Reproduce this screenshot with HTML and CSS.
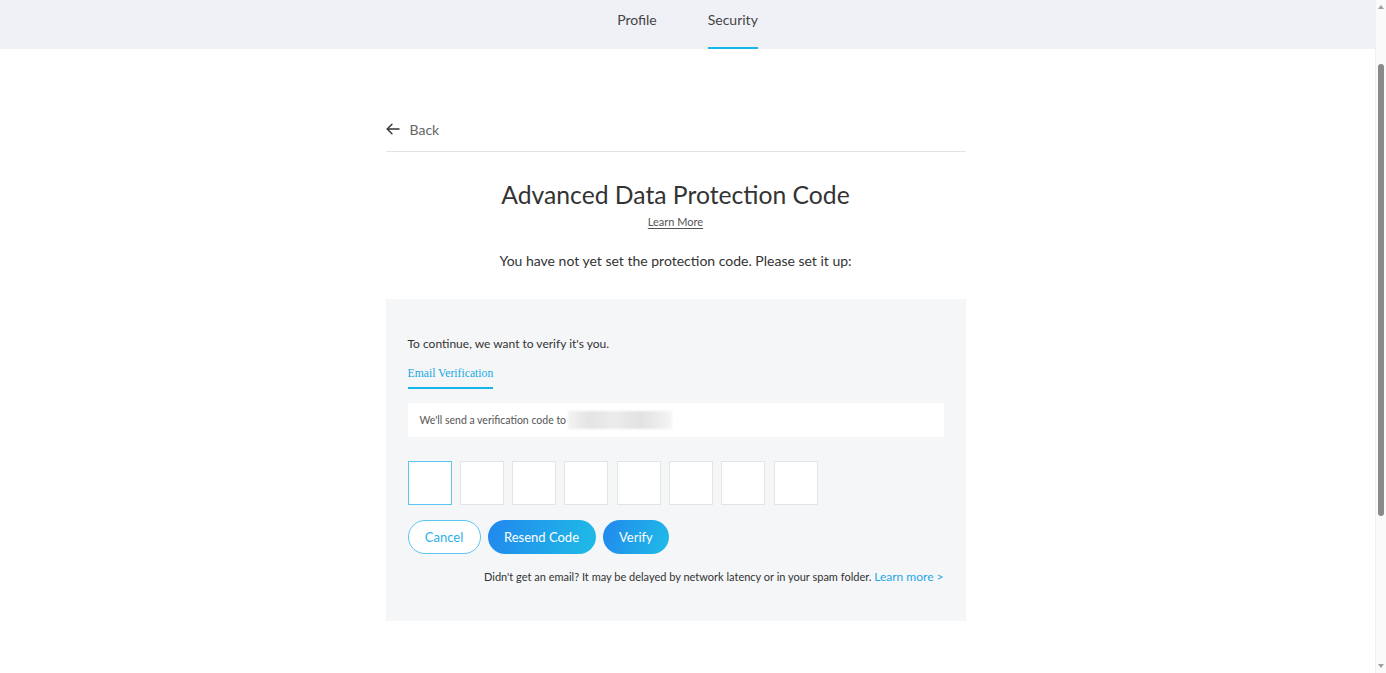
FILE: index.html
```html
<!DOCTYPE html>
<html lang="en">
<head>
<meta charset="UTF-8" />
<meta name="viewport" content="width=device-width, initial-scale=1" />
<title>Security - Advanced Data Protection</title>
<link rel="stylesheet" href="styles.css">
</head>
<body>
  <header class="topbar">
    <nav class="tabs">
      <a class="tab" href="#">Profile</a>
      <a class="tab active" href="#">Security</a>
    </nav>
  </header>

  <main class="page">
    <div class="back-row">
      <a class="back" href="#">
        <svg width="14" height="12" viewBox="0 0 14 12" fill="none" stroke="#333" stroke-width="1.4" stroke-linecap="round" stroke-linejoin="round">
          <path d="M13 6H1.5" />
          <path d="M6 1.2L1.2 6L6 10.8" />
        </svg>
        <span>Back</span>
      </a>
    </div>

    <h1 class="title">Advanced Data Protection Code</h1>
    <div class="learn"><a href="#">Learn More</a></div>
    <p class="intro">You have not yet set the protection code. Please set it up:</p>

    <section class="panel">
      <p class="panel-lead">To continue, we want to verify it's you.</p>

      <div class="method-tabs">
        <span class="method active">Email Verification</span>
      </div>

      <div class="send-info">
        We'll send a verification code to <span class="masked"></span>
      </div>

      <div class="code-row">
        <input class="code-box focus" maxlength="1" />
        <input class="code-box" maxlength="1" />
        <input class="code-box" maxlength="1" />
        <input class="code-box" maxlength="1" />
        <input class="code-box" maxlength="1" />
        <input class="code-box" maxlength="1" />
        <input class="code-box" maxlength="1" />
        <input class="code-box" maxlength="1" />
      </div>

      <div class="actions">
        <button class="btn-outline">Cancel</button>
        <button class="btn-fill">Resend Code</button>
        <button class="btn-fill">Verify</button>
      </div>

      <p class="hint">Didn't get an email? It may be delayed by network latency or in your spam folder. <a href="#">Learn more &gt;</a></p>
    </section>
  </main>

  <!-- window scrollbar, drawn over the right edge -->
  <div class="scrollbar">
    <span class="sb-up"></span>
    <span class="sb-thumb"></span>
    <span class="sb-down"></span>
  </div>
</body>
</html>
```

FILE: styles.css
```css
html, body {
  margin: 0;
  padding: 0;
}
body {
  background: #fff;
  color: #333;
  font-family: Lato, 'Open Sans', sans-serif;
  min-height: 900px;
  padding-right: 11px;
}
a {
  text-decoration: none;
  color: inherit;
}
.topbar {
  background: #f0f1f7;
  height: 49px;
}
.tabs {
  display: flex;
  justify-content: center;
  gap: 51px;
  height: 49px;
}
.tab {
  font-size: 14px;
  color: #444;
  line-height: 40px;
  border-bottom: 2px solid transparent;
  height: 47px;
}
.tab.active {
  border-bottom-color: #17b6ea;
}
.page {
  width: 580px;
  margin-left: calc(50% - 302px);
  padding-top: 68px;
}
.back-row {
  border-bottom: 1px solid #e3e3e3;
  padding-bottom: 10px;
}
.back {
  display: inline-flex;
  align-items: center;
  gap: 10px;
  font-size: 14px;
  color: #666;
  height: 24px;
}
.title {
  text-align: center;
  font-size: 24.7px;
  font-weight: 400;
  color: #333;
  margin: 26px 0 0;
  line-height: 34px;
}
.learn {
  text-align: center;
  font-size: 11px;
  margin-top: 3px;
}
.learn a {
  color: #555;
  text-decoration: underline;
  text-underline-offset: 2px;
}
.intro {
  text-align: center;
  font-size: 14px;
  margin: 24px 0 30px;
  color: #333;
}
.panel {
  background: #f5f6f8;
  padding: 37px 22px 37px;
}
.panel-lead {
  font-size: 12px;
  margin: 0 0 16px;
  color: #333;
}
.method-tabs {
  display: flex;
}
.method {
  font-family: 'Liberation Serif', serif;
  font-size: 11.7px;
  color: #1aa8e0;
  padding-bottom: 7px;
  border-bottom: 2px solid #17b6ea;
}
.send-info {
  margin-top: 14px;
  background: #fff;
  height: 34px;
  display: flex;
  align-items: center;
  padding-left: 12px;
  font-size: 10.5px;
  color: #555;
}
.masked {
  display: inline-block;
  width: 104px;
  height: 18px;
  margin-left: 2px;
  background: linear-gradient(90deg, #f3f3f3, #e4e4e4 20%, #ececec 45%, #e2e2e2 70%, #f5f5f5);
  filter: blur(1px);
}
.code-row {
  display: flex;
  gap: 8.3px;
  margin-top: 24px;
}
.code-box {
  width: 44px;
  height: 44px;
  box-sizing: border-box;
  border: 1px solid #e4e4e4;
  background: #fff;
  outline: none;
  padding: 0;
  text-align: center;
  font-size: 18px;
}
.code-box.focus {
  border-color: #5cc6f0;
}
.actions {
  display: flex;
  gap: 7px;
  margin-top: 15px;
}
.btn-outline,
.btn-fill {
  height: 34px;
  border-radius: 17px;
  font-family: Lato, 'Open Sans', sans-serif;
  font-size: 13px;
  cursor: pointer;
}
.btn-outline {
  width: 73px;
  background: #fff;
  border: 1px solid #5cc6f0;
  color: #2eaee8;
}
.btn-fill {
  border: none;
  color: #fff;
  background: linear-gradient(110deg, #2187ee, #1fbde6);
  padding: 0 16.5px;
}
.hint {
  text-align: right;
  font-size: 11px;
  color: #333;
  margin: 15px 0 0;
}
.hint a {
  color: #1fa6e6;
  font-size: 12px;
}
.scrollbar {
  position: fixed;
  top: 0;
  right: 0;
  bottom: 0;
  width: 11px;
  background: #fafafa;
  border-left: 1px solid #f0f0f0;
  box-sizing: border-box;
}
.sb-thumb {
  position: absolute;
  top: 64px;
  left: 2px;
  width: 6px;
  height: 452px;
  border-radius: 3px;
  background: #8a8a8a;
}
.sb-up,
.sb-down {
  position: absolute;
  left: 2px;
  width: 0;
  height: 0;
  border-left: 3px solid transparent;
  border-right: 3px solid transparent;
}
.sb-up {
  top: 5px;
  border-bottom: 4px solid #a0a0a0;
}
.sb-down {
  bottom: 5px;
  border-top: 4px solid #a0a0a0;
}
```
